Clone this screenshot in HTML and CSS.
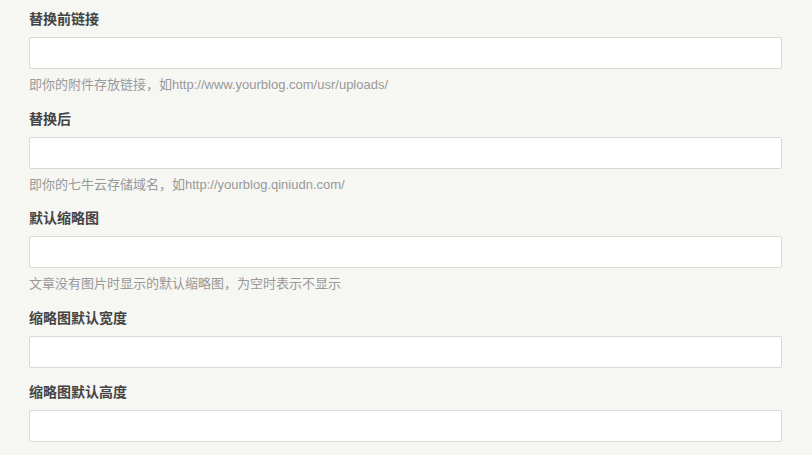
FILE: index.html
```html
<!DOCTYPE html>
<html lang="zh-CN">
<head>
<meta charset="utf-8"/>
<meta content="width=device-width, initial-scale=1.0" name="viewport"/>
<title>插件设置</title>
<link rel="stylesheet" href="styles.css">
</head>
<body>
<form class="typecho-option-form">
<ul class="typecho-option">
<li>
<label class="typecho-label" for="before">替换前链接</label>
<input id="before" name="before" type="text" class="text"/>
<p class="description">即你的附件存放链接，如http://www.yourblog.com/usr/uploads/</p>
</li>
</ul>
<ul class="typecho-option">
<li>
<label class="typecho-label" for="after">替换后</label>
<input id="after" name="after" type="text" class="text"/>
<p class="description">即你的七牛云存储域名，如http://yourblog.qiniudn.com/</p>
</li>
</ul>
<ul class="typecho-option">
<li>
<label class="typecho-label" for="thumb">默认缩略图</label>
<input id="thumb" name="thumb" type="text" class="text"/>
<p class="description">文章没有图片时显示的默认缩略图，为空时表示不显示</p>
</li>
</ul>
<ul class="typecho-option">
<li>
<label class="typecho-label" for="thumbWidth">缩略图默认宽度</label>
<input id="thumbWidth" name="thumbWidth" type="text" class="text"/>
</li>
</ul>
<ul class="typecho-option">
<li>
<label class="typecho-label" for="thumbHeight">缩略图默认高度</label>
<input id="thumbHeight" name="thumbHeight" type="text" class="text"/>
</li>
</ul>
</form>
</body>
</html>
```

FILE: styles.css
```css
body {
  margin: 0;
  background: #f6f6f3;
  color: #444;
  font-family: "Liberation Sans", Arial, "Noto Sans CJK SC", sans-serif;
  font-size: 14px;
}
.typecho-option-form { padding: 9px 30px 0 29px; }
.typecho-option { list-style: none; margin: 0 0 14px; padding: 0; }
.typecho-option:nth-child(2) { margin-bottom: 13px; }
.typecho-label {
  display: block;
  margin-bottom: 8px;
  font-weight: bold;
  line-height: 20px;
}
input.text {
  display: block;
  box-sizing: border-box;
  width: 100%;
  height: 32px;
  padding: 7px;
  margin: 0;
  border: 1px solid #d9d9d6;
  border-radius: 2px;
  background: #fff;
  font: inherit;
}
.description {
  margin: 6px 0 0;
  color: #999;
  font-size: 13px;
  line-height: 20px;
}
```
